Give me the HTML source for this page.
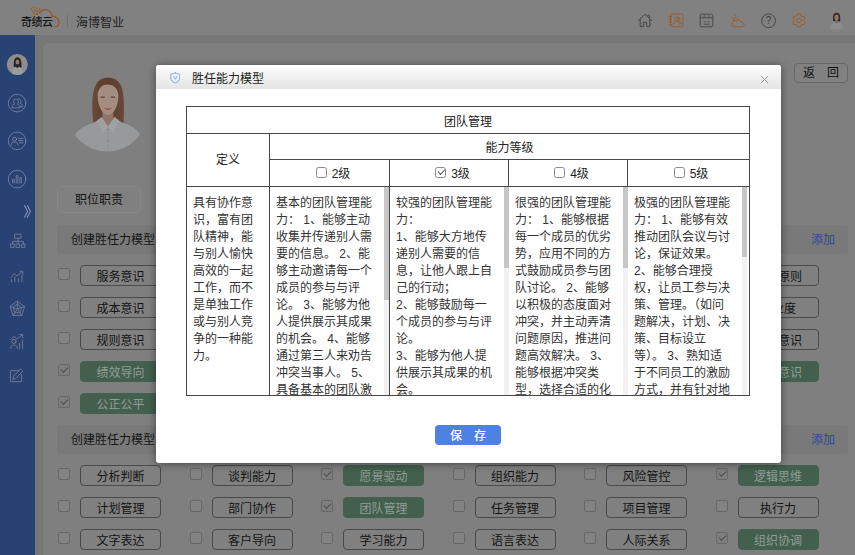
<!DOCTYPE html>
<html lang="zh-CN">
<head>
<meta charset="utf-8">
<title>胜任能力模型</title>
<style>
*{box-sizing:border-box;margin:0;padding:0}
html,body{width:855px;height:555px;overflow:hidden}
body{font-family:"Liberation Sans","Noto Sans CJK SC",sans-serif;font-size:12px;color:#1a1a1a;background:#777;position:relative}
.abs{position:absolute}
#hdr{position:absolute;left:0;top:0;width:855px;height:35px;background:#818181}
#side{position:absolute;left:0;top:35px;width:35px;height:520px;background:#284273}
#card{position:absolute;left:43px;top:43px;width:812px;height:520px;background:#7f7f7f;border-radius:5px 0 0 0}
.co{position:absolute;left:66px;top:11px;font-size:12px;color:#1e1e1e;letter-spacing:0}
.logo-t{position:absolute;left:21px;top:13px;font-size:11px;color:#151515;font-weight:500;letter-spacing:-0.5px}
.sep{position:absolute;left:67px;top:15px;width:1px;height:13px;background:#707070}
.bar{position:absolute;left:57px;width:791px;height:29px;background:#797979;border-radius:4px;line-height:31px;padding-left:14px;font-size:12px;color:#161616}
.bar b{position:absolute;right:13px;top:0;font-weight:normal;color:#2c4a98}
.row{position:absolute;left:58px;width:800px;height:20px;display:flex}
.cell{position:relative;width:131.5px;height:20px;flex:none}
.cb{position:absolute;left:0;top:3px;width:12px;height:12px;border:1px solid #676767;border-radius:2px;background:#838383}
.cb.on{background:#7e7e7e}
.cb.on:after{content:"";position:absolute;left:2px;top:2px;width:6px;height:3px;border-left:1px solid #4d4d4d;border-bottom:1px solid #4d4d4d;transform:rotate(-45deg)}
.bt{position:absolute;left:22px;top:0;width:81px;height:21px;border:1px solid #4a4a4a;border-radius:4px;background:#808080;text-align:center;line-height:23px;font-size:12px;color:#141414;white-space:nowrap}
.bt.g{background:#435f4e;border-color:#435f4e;color:#8f9e94}
#zw{position:absolute;left:57px;top:186px;width:84px;height:27px;border:1px solid #878787;border-radius:5px;background:#808080;text-align:center;line-height:27px;font-size:12px;color:#141414}
#back{position:absolute;left:794px;top:63px;width:54px;height:20px;border:1px solid #666;border-radius:4px;background:#818181;text-align:center;line-height:18px;font-size:12px;color:#111;letter-spacing:0}
/* modal */
#modal{position:absolute;left:156px;top:65px;width:625px;height:398px;background:#fff;border-radius:3px;box-shadow:0 1px 8px rgba(0,0,0,.45)}
#mt{position:absolute;left:0;top:0;width:625px;height:24px;border-radius:3px 3px 0 0;background:linear-gradient(#fefefe,#e4e4e4);font-size:12px;color:#222;line-height:29px;padding-left:36px}
#mx{position:absolute;left:603.5px;top:9.5px;width:9px;height:9px}
table{position:absolute;left:30px;top:41px;border-collapse:collapse;table-layout:fixed;width:563px;font-size:12px;color:#222}
td{border:1px solid #484848;text-align:center;vertical-align:middle;padding:4px 0 0 0;line-height:17px}
td.c{padding:0;vertical-align:top;position:relative}
tr.l td{padding-top:2px}
.tx{height:208px;overflow:hidden;text-align:left;padding:8px 0 0 6px;line-height:17px;font-size:12px;color:#333;position:relative;white-space:nowrap}
.sb{position:absolute;right:0;top:0;width:5px;height:208px;background:#f1f1f1}
.sb i{position:absolute;left:0;top:0;width:5px;background:#c6c6c6}
.lv{display:inline-block;width:11px;height:11px;border:1px solid #8a8a8a;border-radius:2.5px;vertical-align:0px;margin:0 5px 0 7px;position:relative;background:#fff}
.lv.on:after{content:"";position:absolute;left:1.5px;top:1.5px;width:6px;height:3px;border-left:1px solid #555;border-bottom:1px solid #555;transform:rotate(-45deg)}
#save{position:absolute;left:279px;top:360px;width:66px;height:20px;background:#4f81e2;border-radius:4px;color:#fff;text-align:center;line-height:23px;font-size:12px;font-weight:500;letter-spacing:0}
</style>
</head>
<body>
<div id="hdr"></div>
<div id="side"></div>
<div id="card"></div>



<!-- sidebar icons -->
<svg class="abs" style="left:0;top:35px" width="35" height="520" viewBox="0 35 35 520" fill="none" stroke="#7380a2" stroke-width=".9" stroke-linejoin="round" stroke-linecap="round">
  <!-- avatar -->
  <circle cx="17.3" cy="64.5" r="10.5" fill="#8e8e8f" stroke="none"/>
  <path d="M14 67.6 C13 61.4 14.4 57.2 17.4 57.2 C20.6 57.2 22 61.4 21.4 68 Z" fill="#2c2422" stroke="none"/>
  <ellipse cx="17.4" cy="62" rx="1.9" ry="2.6" fill="#93786b" stroke="none"/>
  <path d="M12.2 73.6 C12 69.6 13.6 67.6 15.8 66.8 L17.4 68.4 L19 66.8 C21.6 67.6 23 69.6 22.6 73.6 C21 74.8 19.4 75 17.3 75 C15.2 75 13.6 74.8 12.2 73.6 Z" fill="#9d9d9f" stroke="none"/>
  <!-- users -->
  <circle cx="17.1" cy="103.1" r="8.8"/>
  <path d="M12 107.4 C12 105.4 13.2 104.6 14.6 104.2 C13 102.6 13.4 99 16 99 C18.6 99 19 102.6 17.4 104.2 C18.8 104.6 20 105.4 20 107.4 Z"/>
  <path d="M18.4 98.8 C20.8 98.4 21.6 101.6 20.2 103.4 C21.6 103.8 22.6 104.8 22.6 106.6 H20.4"/>
  <!-- id list -->
  <circle cx="17.1" cy="140.9" r="8.8"/>
  <circle cx="14.6" cy="139.2" r="2"/><path d="M11.2 145 C11.4 142.8 12.8 142 14.6 142 C16.4 142 17.8 142.8 18 145"/>
  <path d="M18.6 138.4H23M18.6 140.6H23M19.4 142.8H23"/>
  <!-- bars -->
  <circle cx="17.1" cy="179.1" r="8.8"/>
  <path d="M12.6 183V179.4H14.2V183M16.2 183V175.6H17.8V183M19.8 183V177.6H21.4V183"/>
  <!-- chevrons -->
  <path d="M24.6 205.6 L27.6 211.4 L24.6 217.2 M27.4 205.6 L30.4 211.4 L27.4 217.2" stroke="#8091b8" stroke-width="1.1"/>
  <!-- org chart -->
  <g stroke="#747d92">
  <rect x="15" y="234.2" width="6" height="4"/><path d="M18 238.2V241.4M12.6 244V241.4H23.4V244M18 241.4V244"/>
  <rect x="11" y="244" width="3.2" height="3.4"/><rect x="16.4" y="244" width="3.2" height="3.4"/><rect x="21.8" y="244" width="3.2" height="3.4"/>
  <!-- trend chart -->
  <path d="M11 277.4 L14.6 273.6 L17 276 L22.6 271.4M19.6 271.2H22.8V274.4"/>
  <path d="M11.4 281.8V279.6M14.8 281.8V277M18.4 281.8V278.6M22 281.8V275.4"/>
  <!-- pentagon -->
  <path d="M17.4 301.4 L24.6 306.6 L21.8 315.4 H13 L10.2 306.6 Z"/>
  <path d="M17.4 304.4 L21.6 307.6 L20 312.8 H14.8 L13.2 307.6 Z"/>
  <path d="M17.4 301.4V309M24.6 306.6L17.4 309L21.8 315.4M13 315.4L17.4 309L10.2 306.6"/>
  <!-- person trend -->
  <circle cx="14" cy="341.4" r="2.1"/><path d="M10.6 348.6 C10.8 346 12 345 14 345 C16 345 17.2 346 17.4 348.6"/>
  <path d="M10.6 339.6 L14 336.4 L16.8 339 L22.4 334.8M19.6 334.6H22.6V337.6"/>
  <path d="M19.6 348.6V343.4M22.6 348.6V340"/>
  <!-- edit -->
  <path d="M18.4 370.6 H10.4 V381.6 H21.6 V374.4"/>
  <path d="M13 379 L13.6 376.2 L20.6 369 L22.8 371.2 L15.8 378.4 Z"/>
  </g>
</svg>

<!-- photo -->
<svg class="abs" style="left:63px;top:68px" width="90" height="90" viewBox="63 68 90 90">
  <defs>
    <clipPath id="pc"><circle cx="107.3" cy="111.4" r="40.2"/></clipPath>
    <filter id="bl" x="-10%" y="-10%" width="120%" height="120%"><feGaussianBlur stdDeviation="0.7"/></filter>
    <linearGradient id="hg" x1="0" y1="0" x2="1" y2="0"><stop offset="0" stop-color="#6a4a3a"/><stop offset=".5" stop-color="#5a3b2c"/><stop offset="1" stop-color="#684838"/></linearGradient>
  </defs>
  <g clip-path="url(#pc)" filter="url(#bl)">
    <!-- hair -->
    <path d="M93.4 122.6 C91.6 108 91.6 92 96 84.4 C99.4 78.6 104.4 77.6 108.4 77.8 C113.4 77.8 118.4 80 121.2 86 C124.6 94 124.2 110 123.6 123 L116 120 L100 120 Z" fill="url(#hg)"/>
    <!-- neck -->
    <path d="M102.4 108 H113.4 V121 L108 126 L102.4 121 Z" fill="#8f7568"/>
    <!-- face -->
    <path d="M97.6 96 C97.4 88.6 101.6 84.6 107.6 84.6 C114 84.6 118.4 88.8 118.4 96 C118.4 104 114.6 114.8 108 115 C101.6 115 97.6 104 97.6 96 Z" fill="#a48c80"/>
    <path d="M98 92 C99.6 87 103.4 84.4 106.4 81.4 C107.4 83 108.4 83 109.4 81.6 C112.6 85 116.6 87 118.4 93 C119.6 86 115.4 79.6 108.4 79.6 C101.4 79.6 96.6 85 98 92 Z" fill="#62412f"/>
    <!-- eyes, mouth -->
    <path d="M100.6 97.2 h4.2 M110.8 97.2 h4.2" stroke="#5b4036" stroke-width="1.2" fill="none"/>
    <path d="M104.2 108 C106.4 110.4 109.8 110.4 112 108 C109.6 108.8 106.6 108.8 104.2 108 Z" fill="#8e3f45"/>
    <!-- shirt -->
    <path d="M68 160 L72 146 C72 133 80 127 94.6 122.4 L101.4 117 L108 126.4 L114.8 117 L121.6 122.4 C136 127 143 133 143 146 L148 160 Z" fill="#98999b"/>
    <path d="M101.4 117 L108 126.4 L103.4 133 L97.4 121.4 Z M114.8 117 L108 126.4 L112.6 133 L118.6 121.4 Z" fill="#a0a1a3"/>
    <path d="M108 126.4 V152" stroke="#909193" stroke-width=".8"/>
    <circle cx="107.6" cy="129.6" r=".6" fill="#7d6f5c"/><circle cx="107.6" cy="141" r=".6" fill="#7d6f5c"/>
  </g>
</svg>
<!-- logo -->
<svg class="abs" style="left:28px;top:5px" width="34" height="24" viewBox="0 0 34 24">
  <path d="M12.5 6.5 C15 4.2 19 4 21.5 6.2 C23.5 8 24 10 24 11 C28 11.3 31.5 14 31 18 C30.6 20.3 28.5 21.8 26.2 21.6" fill="none" stroke="#9a571f" stroke-width="1.3" stroke-linecap="round"/>
  <g fill="#9a571f"><circle cx="3.5" cy="4" r=".7"/><circle cx="6" cy="2.8" r=".7"/><circle cx="8.6" cy="3.2" r=".7"/><circle cx="4.5" cy="6.5" r=".8"/><circle cx="7" cy="5.6" r=".9"/><circle cx="9.6" cy="6.2" r=".9"/><circle cx="11.6" cy="4.2" r=".7"/><circle cx="6.2" cy="8.6" r="1"/><circle cx="9" cy="8.8" r="1.1"/><circle cx="11.8" cy="7.6" r="1"/></g>
</svg>
<!-- header icons -->
<svg class="abs" style="left:637px;top:13px" width="16" height="15" viewBox="0 0 16 15" fill="none" stroke="#3d3d3d" stroke-width="0.85" stroke-linejoin="round" stroke-linecap="round">
  <path d="M1.2 7.6 L8 1.2 L14.8 7.6"/><path d="M3.2 6.4 V13.6 H6.4 V9.4 H9.6 V13.6 H12.8 V6.4"/><path d="M10.8 2.2 H12.4 V4.6"/>
</svg>
<svg class="abs" style="left:668px;top:13px" width="16" height="15" viewBox="0 0 16 15" fill="none" stroke="#a0561d" stroke-width="0.85" stroke-linejoin="round" stroke-linecap="round">
  <rect x="2.6" y="1" width="12.4" height="12.8" rx="1.6"/><path d="M1.2 3.6H3.6M1.2 6.2H3.6M1.2 8.8H3.6M1.2 11.4H3.6"/>
  <circle cx="8.6" cy="6" r="1.9"/><path d="M5.2 11.4 C5.4 9.2 6.8 8.4 8.6 8.4 C10.4 8.4 11.8 9.2 12 11.4"/><path d="M10.6 4.2 C12.2 4 12.8 6.4 11.4 7.4 M12 8.6 C12.8 9 13.2 9.8 13.2 10.8"/>
</svg>
<svg class="abs" style="left:699px;top:13px" width="15" height="15" viewBox="0 0 15 15" fill="none" stroke="#404040" stroke-width="0.85" stroke-linejoin="round">
  <rect x="1.2" y="1.2" width="12.6" height="12.6" rx="1.4"/><path d="M1.2 4.8H13.8"/><path d="M5 3H5.8M9.2 3H10" stroke-linecap="round"/>
  <text x="7.5" y="11.6" font-family="Liberation Sans, sans-serif" font-size="6" text-anchor="middle" fill="#454545" stroke="none">12</text>
</svg>
<svg class="abs" style="left:730px;top:14px" width="16" height="14" viewBox="0 0 16 14" fill="none" stroke="#a0561d" stroke-width="0.85" stroke-linejoin="round" stroke-linecap="round">
  <path d="M4 12.8 C1.6 12.8 .8 10 2.6 8.8 C2.6 6.8 5 5.8 6.4 7 C7.6 5 11 5.4 11.4 8.2 C14.4 8 15.4 12.6 12.2 12.8 Z"/>
  <path d="M3.4 6.2 C3.2 4 5.6 2.6 7.4 4.2"/><path d="M1.4 3.4L2.2 4.2M5 1V2M8.6 2L8 2.8"/>
</svg>
<svg class="abs" style="left:761px;top:13px" width="16" height="16" viewBox="0 0 16 16" fill="none" stroke="#3d3d3d" stroke-width="0.85">
  <circle cx="7.6" cy="7.8" r="6.9"/>
  <text x="7.6" y="11.4" font-family="Liberation Sans, sans-serif" font-size="10" text-anchor="middle" fill="#3d3d3d" stroke="none">?</text>
</svg>
<svg class="abs" style="left:792px;top:13px" width="14" height="15" viewBox="0 0 14 15" fill="none" stroke="#a0561d" stroke-width="0.85" stroke-linejoin="round">
  <path d="M5.6 1 H8.4 L8.8 2.9 L10 3.6 L11.8 3 L13.2 5.4 L11.8 6.7 V8.3 L13.2 9.6 L11.8 12 L10 11.4 L8.8 12.1 L8.4 14 H5.6 L5.2 12.1 L4 11.4 L2.2 12 L.8 9.6 L2.2 8.3 V6.7 L.8 5.4 L2.2 3 L4 3.6 L5.2 2.9 Z"/>
  <circle cx="7" cy="7.5" r="2.2"/>
</svg>
<!-- header avatar -->
<svg class="abs" style="left:829px;top:12px" width="15" height="18" viewBox="0 0 15 18">
  <path d="M4.2 9 C3.4 4 4.6 .8 7.6 .8 C10.6 .8 11.8 4 11 9.4 Z" fill="#2a2422"/>
  <ellipse cx="7.6" cy="5.4" rx="2.3" ry="3" fill="#8d7265"/>
  <path d="M1.2 17.4 C1 12.6 3 10.4 5.8 9.8 L7.6 11.4 L9.4 9.8 C12.2 10.4 13.8 12.6 13.6 17.4 Z" fill="#8c8c8e"/>
  <path d="M6.4 8 H8.8 V10.2 L7.6 11.4 L6.4 10.2 Z" fill="#86695c"/>
</svg>
<div class="logo-t">奇绩云</div>
<div class="sep"></div>
<div class="co" style="left:76px;top:13px">海博智业</div>

<div id="back">返　回</div>
<div id="zw">职位职责</div>

<div class="bar" style="top:225px">创建胜任力模型<b>添加</b></div>
<div class="bar" style="top:425px">创建胜任力模型<b>添加</b></div>

<div id="grid">
<div class="row" style="top:265px">
  <div class="cell"><i class="cb"></i><span class="bt">服务意识</span></div>
  <div class="cell"><i class="cb"></i><span class="bt">团队意识</span></div>
  <div class="cell"><i class="cb"></i><span class="bt">保密意识</span></div>
  <div class="cell"><i class="cb"></i><span class="bt">责任意识</span></div>
  <div class="cell"><i class="cb"></i><span class="bt">诚信正直</span></div>
  <div class="cell"><i class="cb"></i><span class="bt">坚持原则</span></div>
</div>
<div class="row" style="top:297px">
  <div class="cell"><i class="cb"></i><span class="bt">成本意识</span></div>
  <div class="cell"><i class="cb"></i><span class="bt">质量意识</span></div>
  <div class="cell"><i class="cb"></i><span class="bt">安全意识</span></div>
  <div class="cell"><i class="cb"></i><span class="bt">创新意识</span></div>
  <div class="cell"><i class="cb"></i><span class="bt">忠诚度</span></div>
  <div class="cell"><i class="cb"></i><span class="bt">敬业度</span></div>
</div>
<div class="row" style="top:329px">
  <div class="cell"><i class="cb"></i><span class="bt">规则意识</span></div>
  <div class="cell"><i class="cb"></i><span class="bt">大局意识</span></div>
  <div class="cell"><i class="cb"></i><span class="bt">风险意识</span></div>
  <div class="cell"><i class="cb"></i><span class="bt">学习意识</span></div>
  <div class="cell"><i class="cb"></i><span class="bt">主动性</span></div>
  <div class="cell"><i class="cb"></i><span class="bt">全局意识</span></div>
</div>
<div class="row" style="top:361px">
  <div class="cell"><i class="cb on"></i><span class="bt g">绩效导向</span></div>
  <div class="cell"><i class="cb"></i><span class="bt">客户意识</span></div>
  <div class="cell"><i class="cb"></i><span class="bt">结果导向</span></div>
  <div class="cell"><i class="cb"></i><span class="bt">积极乐观</span></div>
  <div class="cell"><i class="cb"></i><span class="bt">自信心</span></div>
  <div class="cell"><i class="cb on"></i><span class="bt g">危机意识</span></div>
</div>
<div class="row" style="top:393px">
  <div class="cell"><i class="cb on"></i><span class="bt g">公正公平</span></div>
</div>
<div class="row" style="top:465px">
  <div class="cell"><i class="cb"></i><span class="bt">分析判断</span></div>
  <div class="cell"><i class="cb"></i><span class="bt">谈判能力</span></div>
  <div class="cell"><i class="cb on"></i><span class="bt g">愿景驱动</span></div>
  <div class="cell"><i class="cb"></i><span class="bt">组织能力</span></div>
  <div class="cell"><i class="cb"></i><span class="bt">风险管控</span></div>
  <div class="cell"><i class="cb on"></i><span class="bt g">逻辑思维</span></div>
</div>
<div class="row" style="top:497px">
  <div class="cell"><i class="cb"></i><span class="bt">计划管理</span></div>
  <div class="cell"><i class="cb"></i><span class="bt">部门协作</span></div>
  <div class="cell"><i class="cb on"></i><span class="bt g">团队管理</span></div>
  <div class="cell"><i class="cb"></i><span class="bt">任务管理</span></div>
  <div class="cell"><i class="cb"></i><span class="bt">项目管理</span></div>
  <div class="cell"><i class="cb"></i><span class="bt">执行力</span></div>
</div>
<div class="row" style="top:529px">
  <div class="cell"><i class="cb"></i><span class="bt">文字表达</span></div>
  <div class="cell"><i class="cb"></i><span class="bt">客户导向</span></div>
  <div class="cell"><i class="cb"></i><span class="bt">学习能力</span></div>
  <div class="cell"><i class="cb"></i><span class="bt">语言表达</span></div>
  <div class="cell"><i class="cb"></i><span class="bt">人际关系</span></div>
  <div class="cell"><i class="cb on"></i><span class="bt g">组织协调</span></div>
</div>
</div>

<div id="modal">
  <div id="mt">胜任能力模型</div>
  <svg class="abs" style="left:13.6px;top:7.2px" width="10.6" height="11.8" viewBox="0 0 12 13" fill="none" stroke="#6b9bef" stroke-width="1" stroke-linejoin="round" stroke-linecap="round"><path d="M6 .8 C4.4 1.8 2.6 2.2 .9 2.2 V6.6 C.9 9.4 3 11.2 6 12.2 C9 11.2 11.1 9.4 11.1 6.6 V2.2 C9.4 2.2 7.6 1.8 6 .8 Z"/><path d="M4.2 4.8 L6 8 L7.8 4.8" stroke-width=".9"/></svg>
  <svg id="mx" viewBox="0 0 10 10"><path d="M1 1L9 9M9 1L1 9" stroke="#9a9a9a" stroke-width="1.1" fill="none"/></svg>
  <table>
    <colgroup><col style="width:83px"><col style="width:120px"><col style="width:119px"><col style="width:119px"><col style="width:122px"></colgroup>
    <tr style="height:27px"><td colspan="5" style="padding-top:5px">团队管理</td></tr>
    <tr style="height:26px"><td rowspan="2" style="padding-top:1px">定义</td><td colspan="4">能力等级</td></tr>
    <tr class="l" style="height:27px"><td><span class="lv"></span>2级</td><td><span class="lv on"></span>3级</td><td><span class="lv"></span>4级</td><td style="padding-right:2px"><span class="lv"></span>5级</td></tr>
    <tr>
      <td class="c"><div class="tx">具有协作意<br>识，富有团<br>队精神，能<br>与别人愉快<br>高效的一起<br>工作，而不<br>是单独工作<br>或与别人竞<br>争的一种能<br>力。</div></td>
      <td class="c"><div class="tx">基本的团队管理能<br>力： 1、能够主动<br>收集并传递别人需<br>要的信息。 2、能<br>够主动邀请每一个<br>成员的参与与评<br>论。 3、能够为他<br>人提供展示其成果<br>的机会。 4、能够<br>通过第三人来劝告<br>冲突当事人。 5、<br>具备基本的团队激</div><div class="sb"><i style="height:113px"></i></div></td>
      <td class="c"><div class="tx">较强的团队管理能<br>力：<br>1、能够大方地传<br>递别人需要的信<br>息，让他人跟上自<br>己的行动；<br>2、能够鼓励每一<br>个成员的参与与评<br>论。<br>3、能够为他人提<br>供展示其成果的机<br>会。</div><div class="sb" style="right:-1px"><i style="height:81px"></i></div></td>
      <td class="c"><div class="tx">很强的团队管理能<br>力： 1、能够根据<br>每一个成员的优劣<br>势，应用不同的方<br>式鼓励成员参与团<br>队讨论。 2、能够<br>以积极的态度面对<br>冲突，并主动弄清<br>问题原因，推进问<br>题高效解决。 3、<br>能够根据冲突类<br>型，选择合适的化</div><div class="sb" style="right:-1px"><i style="height:81px"></i></div></td>
      <td class="c"><div class="tx">极强的团队管理能<br>力： 1、能够有效<br>推动团队会议与讨<br>论，保证效果。<br>2、能够合理授<br>权，让员工参与决<br>策、管理。（如问<br>题解决，计划、决<br>策、目标设立<br>等）。 3、熟知适<br>于不同员工的激励<br>方式，并有针对地</div><div class="sb" style="right:2px"><i style="height:70px"></i></div></td>
    </tr>
  </table>
  <div id="save">保　存</div>
</div>

</body>
</html>
